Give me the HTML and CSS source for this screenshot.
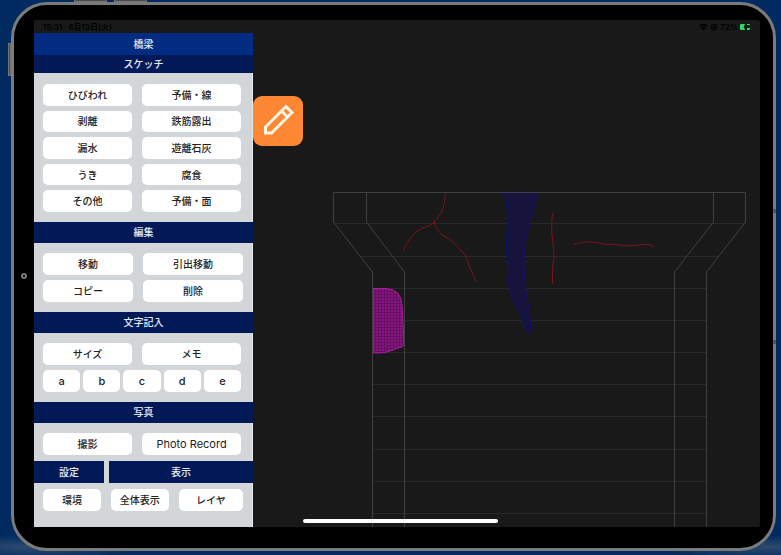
FILE: index.html
```
<!DOCTYPE html>
<html lang="ja">
<head>
  <meta charset="UTF-8" />
  <meta name="viewport" content="width=device-width, initial-scale=1.0" />
  <title>橋梁スケッチ</title>
  <link rel="stylesheet" href="styles.css">
</head>
<body>
  <div class="device">
    <span class="key key-up"></span>
    <span class="key key-down"></span>
    <span class="key key-side"></span>
    <span class="seam seam-top"></span>
    <span class="seam seam-bottom"></span>
    <span class="camera"></span>

    <div class="screen">
      <header class="status">
        <span>15:31</span>
        <span class="date">6月13日(火)</span>
        <span class="status-right">
          <svg width="9" height="8" viewBox="0 0 9 8">
            <path d="M0 2.6Q4.5-1.2 9 2.6L7.9 3.8Q4.5 1 1.1 3.8ZM1.9 4.6Q4.5 2.5 7.1 4.6L4.5 7.5Z" />
          </svg>
          <svg width="8" height="8" viewBox="0 0 8 8">
            <circle cx="4" cy="4" r="3" fill="none" stroke="#000" />
            <path d="M2.5 3.6h3v2h-3zM3 3.6V2.4h2v1.2" />
          </svg>
          <span>72%</span>
          <svg width="11" height="8" viewBox="0 0 11 8">
            <rect y="1" width="10" height="6" rx="1" fill="#062c14" />
            <path d="M1 1h4L4 4l1 3H1Q0 7 0 6V2Q0 1 1 1ZM7 1h2q1 0 1 1H7ZM7 5h3q0 2-1 2H7Z" fill="#2fd566" />
            <path d="M6.5 0 3.5 4.5h2L5 8l3-4.5H6Z" fill="#000" />
          </svg>
        </span>
      </header>

      <div class="app">
        <nav class="panel">
          <h1>橋梁</h1>
          <h2 class="first">スケッチ</h2>
          <div class="group sketch">
            <button>ひびわれ</button>
            <button>予備・線</button>
            <button>剥離</button>
            <button>鉄筋露出</button>
            <button>漏水</button>
            <button>遊離石灰</button>
            <button>うき</button>
            <button>腐食</button>
            <button>その他</button>
            <button>予備・面</button>
          </div>

          <h2>編集</h2>
          <div class="group edit">
            <button>移動</button>
            <button>引出移動</button>
            <button>コピー</button>
            <button>削除</button>
          </div>

          <h2>文字記入</h2>
          <div class="group">
            <button>サイズ</button>
            <button>メモ</button>
            <div class="letters">
              <button>a</button>
              <button>b</button>
              <button>c</button>
              <button>d</button>
              <button>e</button>
            </div>
          </div>

          <h2>写真</h2>
          <div class="group photo">
            <button>撮影</button>
            <button class="latin">Photo Record</button>
          </div>

          <div class="split">
            <h2>設定</h2>
            <h2>表示</h2>
          </div>
          <div class="group view">
            <button>環境</button>
            <button>全体表示</button>
            <button>レイヤ</button>
          </div>
        </nav>

        <main class="drawing">
          <button class="pen" aria-label="ペン">
            <svg width="50" height="50" viewBox="0 0 50 50">
              <path d="M12.500 37V31L33 10.500L39 16.500L18.500 37ZM28.500 15L34.500 21" />
            </svg>
          </button>
          <svg class="plan" viewBox="253 33 507 494" preserveAspectRatio="xMinYMin meet">
            <defs>
              <pattern id="mesh" width="3" height="3" patternUnits="userSpaceOnUse">
                <rect width="3" height="3" fill="#8a1483" />
                <path d="M0 .5H3M.5 0V3" stroke="#64115f" stroke-width="1" />
              </pattern>
            </defs>

            <!-- 補助線 -->
            <path class="grid" d="M334 223.500H744M360 256.500H718M372 288.500H707M372 320.500H707M372 352.500H707M372 384.500H707M372 416.500H707M372 449.500H707M372 481.500H707M372 513.500H707" />

            <!-- 損傷 -->
            <path class="leak" d="M499 193Q505 194 506 200Q508 213 507 230Q506 245 507 262Q508 285 511 295Q515 306 521 316Q524 329 527 333Q530 336 531 327Q530 315 528 304Q526 292 525 280Q523 264 525 247Q526 234 530 221Q535 207 537.500 193Z" />
            <path class="peel" d="M373 288.500H386Q401 289 402 305Q403 320 404 345Q403 347 398 348Q391 351 385 352.500Q380 353 373 353Z" />
            <path class="crack" d="M445.500 193Q445 202 443 208Q441 214 438 217L434.500 221V225Q438 231 442 235Q449 238 453 242Q459 248 465 255Q468 261 470 268Q473 274 476 282M434.500 222Q430 227 422 228Q415 231 409 240Q405 245 403.500 251" />
            <path class="crack" d="M553 213Q551 221 552 235Q554 250 554 258Q552 267 552.500 284" />
            <path class="crack" d="M574 244L577 244Q579 242 590 242Q597 242 603 244Q616 244 627 246Q636 245 645 244.500Q651 244 654 247" />

            <!-- 橋脚 -->
            <path class="outline" d="M372.500 527V272L333.500 222V192.500H745.500V222L706.500 272V527M404.500 527V272L366.500 222V192.500M674.500 527V272L713.500 222V192.500" />
          </svg>
        </main>
      </div>
      <span class="home"></span>
    </div>
  </div>
</body>
</html>
```
FILE: styles.css
```
* {
  box-sizing: border-box;
}
body {
  margin: 0;
  padding: 2px 5px 4px 11px;
  min-height: 100vh;
  display: flex;
  background:
    radial-gradient(ellipse 110px 12px at 30px 547px, #2f4a6c, transparent),
    radial-gradient(ellipse 110px 12px at 770px 547px, #2f4a6c, transparent),
    #012b60;
  font-family: Inter, "Noto Sans CJK JP", sans-serif;
}

/* 本体 */
.device {
  position: relative;
  flex: 1;
  display: flex;
  padding: 15px 13px 21px 20px;
  background: #000;
  border: 3px solid #7b7b7b;
  border-radius: 36px;
}
.key,
.seam,
.camera {
  position: absolute;
}
.key {
  background: #4c4c4c;
  border: 1px solid #747474;
}
.key-up,
.key-down {
  top: -6px;
  width: 33px;
  height: 3px;
}
.key-up {
  left: 60px;
}
.key-down {
  left: 100px;
}
.key-side {
  left: -6px;
  top: 38px;
  width: 3px;
  height: 33px;
}
.seam {
  right: -3px;
  width: 3px;
  height: 4px;
  background: #555;
}
.seam-top {
  top: 204px;
}
.seam-bottom {
  top: 335px;
}
.camera {
  left: 7px;
  top: 50%;
  width: 6px;
  height: 6px;
  margin-top: -4px;
  border: 2px solid #777;
  border-radius: 50%;
}
.screen {
  position: relative;
  flex: 1;
  display: flex;
  flex-direction: column;
  background: #191919;
  border-radius: 0 3px 3px 0;
  overflow: hidden;
}
.status {
  display: flex;
  align-items: center;
  height: 13px;
  padding: 0 9px;
  font-size: 8px;
  font-weight: 600;
  color: #000;
}
.date {
  margin-left: 6px;
}
.status-right {
  display: flex;
  align-items: center;
  gap: 2px;
  margin-left: auto;
}
.app {
  flex: 1;
  display: flex;
}

/* 左メニュー */
.panel {
  flex: 0 0 219px;
  background: #d2d6d9;
  border-right: 1px solid #e6e9eb;
}
.panel h1,
.panel h2 {
  margin: 0 -1px 0 0;
  font-size: 10px;
  font-weight: 500;
  text-align: center;
  color: #e8ebf5;
}
.panel h1 {
  line-height: 22px;
  background: #022c82;
}
.panel h2 {
  line-height: 21px;
  background: #011a57;
}
.panel .first {
  line-height: 18px;
}
.group {
  display: grid;
  grid-template-columns: 9fr 10fr;
  grid-auto-rows: minmax(21px, 1fr);
  gap: 5px 10px;
  height: 69px;
  padding: 10px 11px 10px 9px;
}
.group button {
  min-width: 0;
  padding: 0;
  border: none;
  border-radius: 5px;
  background: #fff;
  color: #222;
  font-family: inherit;
  font-size: 10px;
  font-weight: 500;
  line-height: 20px;
  white-space: nowrap;
}
.group .latin {
  font-size: 11px;
  font-weight: 400;
}
.sketch {
  height: 149px;
  padding-top: 11px;
}
.edit {
  padding-right: 9px;
}
.letters {
  grid-column: 1 / -1;
  display: grid;
  grid-template-columns: repeat(5, 1fr);
  gap: 3px;
}
.letters button {
  font-size: 11px;
}
.photo {
  height: 38px;
  padding-bottom: 6px;
}
.split {
  display: grid;
  grid-template-columns: 70px 1fr;
  gap: 5px;
}
.split h2 {
  margin: 0;
  line-height: 22px;
}
.split h2:last-child {
  margin-right: -1px;
}
.view {
  grid-template-columns: 9fr 9fr 10fr;
  height: 34px;
  padding: 6px 9px;
}

/* 図面 */
.drawing {
  position: relative;
  flex: 1;
}
.plan {
  display: block;
  width: 100%;
  fill: none;
}
.grid {
  stroke: #292929;
}
.outline {
  stroke: #404040;
}
.crack {
  stroke: #7d1519;
}
.leak {
  fill: #16133c;
  stroke: #17126a;
}
.peel {
  fill: url(#mesh);
  stroke: #a81da0;
}
.pen {
  position: absolute;
  left: 0;
  top: 63px;
  width: 50px;
  height: 50px;
  padding: 0;
  border: none;
  border-radius: 9px;
  background: #fd8733;
}
.pen svg {
  display: block;
  fill: none;
  stroke: #fff4e6;
  stroke-width: 3;
}
.home {
  position: absolute;
  left: 37%;
  bottom: 4px;
  width: 195px;
  height: 4px;
  border-radius: 2px;
  background: #fff;
}
```
